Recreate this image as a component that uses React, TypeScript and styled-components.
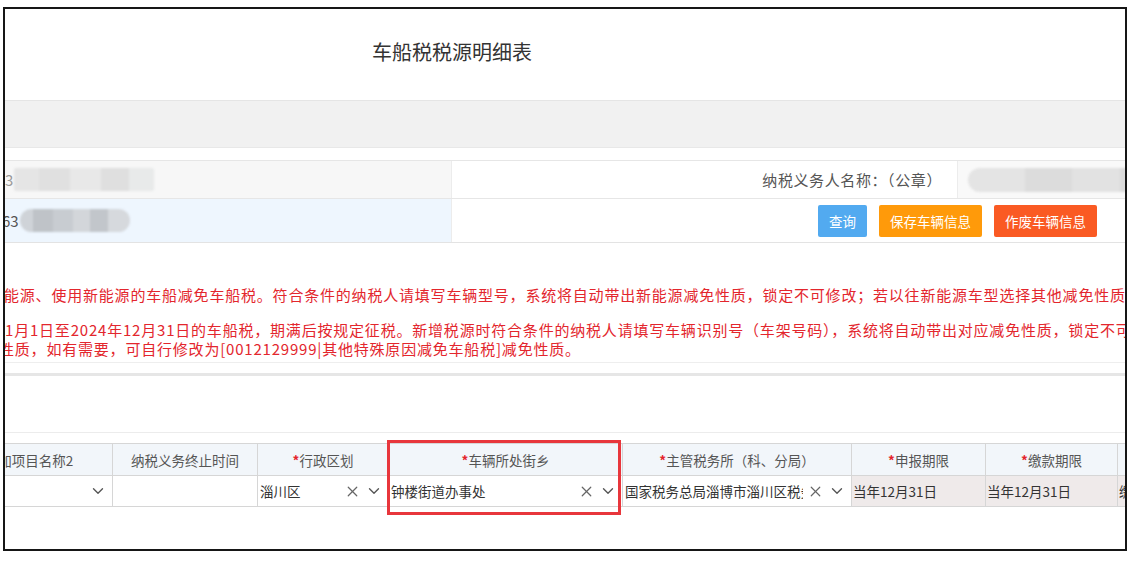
import React from "react";
import styled, { createGlobalStyle } from "styled-components";
import { X, ChevronDown } from "lucide-react";

const GlobalStyle = createGlobalStyle`
  html, body {
    margin: 0;
    padding: 0;
    background: #fff;
  }
  body {
    font-family: "Microsoft YaHei", "Noto Sans CJK SC", "Noto Sans", sans-serif;
    color: #333;
  }
`;

const Frame = styled.div`
  margin: 7px 0 0 3px;
  width: 1120px;
  height: 540px;
  border: 2px solid #161616;
  overflow: hidden;
  background: #fff;
  display: flex;
  flex-direction: column;
`;

const TitleBar = styled.div`
  height: 91px;
  box-sizing: border-box;
  padding: 33px 226px 0 0;
  text-align: center;
  font-size: 20px;
  line-height: 20px;
  color: #333;
`;

const GreyBand = styled.div`
  height: 48px;
  box-sizing: border-box;
  background: #f1f1f1;
  border-top: 1px solid #e5e5e5;
  border-bottom: 1px solid #e8e8e8;
  margin-bottom: 12px;
`;

const InfoRow = styled.div<{ $height: number; $last?: boolean }>`
  display: grid;
  grid-template-columns: 447px 1fr 168px;
  height: ${(p) => p.$height}px;
  box-sizing: border-box;
  border-top: 1px solid #e6e6e6;
  border-bottom: ${(p) => (p.$last ? "1px solid #e3e3e3" : "none")};
`;

const MaskedCell = styled.div<{ $tone: string }>`
  display: flex;
  align-items: center;
  gap: 1px;
  background: ${(p) => p.$tone};
  border-right: 1px solid #ececec;
  font-size: 15px;
  overflow: hidden;
`;

const Tail = styled.span<{ $shift: number; $color: string }>`
  margin-left: ${(p) => p.$shift}px;
  color: ${(p) => p.$color};
`;

const Blur = styled.div<{ $width: number; $round?: boolean; $dark?: boolean }>`
  width: ${(p) => p.$width}px;
  height: 23px;
  border-radius: ${(p) => (p.$round ? "12px" : "2px")};
  filter: blur(1.2px);
  background: ${(p) =>
    p.$dark
      ? "linear-gradient(90deg, #cfd3d8 0 12%, #bfc3c8 12% 30%, #c8ccd1 30% 48%, #d3d6da 48% 64%, #c2c6cb 64% 80%, #d6d9dd 80%)"
      : "linear-gradient(90deg, #e5e5e5 0 18%, #e0e0e0 18% 40%, #e8e8e8 40% 62%, #dfdfdf 62% 82%, #e8eaea 82%)"};
`;

const LabelCell = styled.div`
  display: flex;
  align-items: center;
  justify-content: flex-end;
  padding-right: 15px;
  font-size: 15px;
  letter-spacing: 0.6px;
  color: #555;
`;

const ValueCell = styled.div`
  display: flex;
  align-items: center;
  padding-left: 10px;
  background: #f9f9f9;
  border-left: 1px solid #ececec;
  overflow: hidden;
`;

const Pill = styled.div`
  flex: none;
  width: 190px;
  height: 24px;
  border-radius: 12px;
  filter: blur(1px);
  background: linear-gradient(90deg, #e4e4e4 0 30%, #dcdcdc 30% 55%, #e2e2e2 55% 80%, #dadada 80%);
`;

const ActionCell = styled.div`
  grid-column: 2 / 4;
  display: flex;
  align-items: center;
  justify-content: flex-end;
  gap: 12px;
  padding-right: 28px;
`;

const ActionButton = styled.button<{ $bg: string }>`
  height: 32px;
  padding: 0 11px;
  border: none;
  border-radius: 2px;
  background: ${(p) => p.$bg};
  color: #fff;
  font-family: inherit;
  font-size: 13.5px;
  cursor: pointer;
`;

const Notes = styled.div`
  margin-top: 42px;
  padding-bottom: 4px;
  border-bottom: 1px solid #eeeeee;
  color: #e3262d;
  font-size: 15px;
  letter-spacing: 0.8px;
`;

const NoteLine = styled.div<{ $indent: number; $height: number; $gap?: number }>`
  white-space: nowrap;
  line-height: ${(p) => p.$height}px;
  text-indent: ${(p) => p.$indent}px;
  margin-top: ${(p) => p.$gap ?? 0}px;
`;

const ThickRule = styled.div`
  margin-top: 10px;
  height: 3px;
  background: #e6e6e6;
`;

const ThinRule = styled.div`
  margin-top: 56px;
  height: 1px;
  background: #ececec;
`;

const TableWrap = styled.div`
  position: relative;
  margin-top: 10px;
`;

const Grid = styled.table`
  margin-left: -60px;
  width: 1272px;
  border-collapse: collapse;
  table-layout: fixed;
  font-size: 13.5px;
`;

const Col = styled.col<{ $w: number }>`
  width: ${(p) => p.$w}px;
`;

const Head = styled.th`
  height: 31px;
  padding: 0;
  background: #f2f6fa;
  border: 1px solid #d6d6d6;
  color: #555;
  font-weight: normal;
  white-space: nowrap;
  overflow: hidden;
`;

const Star = styled.span`
  color: #e4242b;
  font-weight: bold;
`;

const Cell = styled.td<{ $locked?: boolean }>`
  height: 30px;
  padding: 0;
  background: ${(p) => (p.$locked ? "#efeaea" : "#fff")};
  border: 1px solid #d6d6d6;
  color: #333;
  white-space: nowrap;
  overflow: hidden;
`;

const SelectBox = styled.div`
  display: flex;
  align-items: center;
  gap: 4px;
  padding: 0 5px 0 2px;
`;

const SelectText = styled.span`
  flex: 1;
  min-width: 0;
  overflow: hidden;
  white-space: nowrap;
`;

const PlainText = styled.div`
  padding-left: 1px;
`;

const Highlight = styled.div`
  position: absolute;
  left: 382px;
  top: -3px;
  width: 234px;
  height: 75px;
  box-sizing: border-box;
  border: 3px solid #e8363c;
  pointer-events: none;
`;

type Column = { key: string; title: string; width: number; required?: boolean };

const columns: Column[] = [
  { key: "fjxm", title: "附加项目名称2", width: 167 },
  { key: "zzsj", title: "纳税义务终止时间", width: 145 },
  { key: "xzqh", title: "行政区划", width: 131, required: true },
  { key: "jdxz", title: "车辆所处街乡", width: 234, required: true },
  { key: "swjg", title: "主管税务所（科、分局）", width: 229, required: true },
  { key: "sbqx", title: "申报期限", width: 134, required: true },
  { key: "jkqx", title: "缴款期限", width: 132, required: true },
  { key: "more", title: "", width: 100 },
];

function Select({ value, clearable }: { value: string; clearable?: boolean }) {
  return (
    <SelectBox>
      <SelectText>{value}</SelectText>
      {clearable && <X size={17} strokeWidth={1.7} color="#666" />}
      <ChevronDown size={18} strokeWidth={1.8} color="#555" />
    </SelectBox>
  );
}

export default function App() {
  return (
    <>
      <GlobalStyle />
      <Frame>
        <TitleBar>车船税税源明细表</TitleBar>
        <GreyBand />

        <InfoRow $height={38}>
          <MaskedCell $tone="#f7f7f7">
            <Tail $shift={0} $color="#9a9a9a">3</Tail>
            <Blur $width={140} />
          </MaskedCell>
          <LabelCell>纳税义务人名称：（公章）</LabelCell>
          <ValueCell>
            <Pill />
          </ValueCell>
        </InfoRow>

        <InfoRow $height={45} $last>
          <MaskedCell $tone="#eef6fe">
            <Tail $shift={-3} $color="#555">63</Tail>
            <Blur $width={110} $round $dark />
          </MaskedCell>
          <ActionCell>
            <ActionButton $bg="#52aaf0">查询</ActionButton>
            <ActionButton $bg="#ff9a0a">保存车辆信息</ActionButton>
            <ActionButton $bg="#fa5a23">作废车辆信息</ActionButton>
          </ActionCell>
        </InfoRow>

        <Notes>
          <NoteLine $indent={-1} $height={20}>
            能源、使用新能源的车船减免车船税。符合条件的纳税人请填写车辆型号，系统将自动带出新能源减免性质，锁定不可修改；若以往新能源车型选择其他减免性质，需重新选择。
          </NoteLine>
          <NoteLine $indent={0} $height={19} $gap={15}>
            1月1日至2024年12月31日的车船税，期满后按规定征税。新增税源时符合条件的纳税人请填写车辆识别号（车架号码），系统将自动带出对应减免性质，锁定不可修改。
          </NoteLine>
          <NoteLine $indent={-6} $height={19}>
            性质，如有需要，可自行修改为[0012129999|其他特殊原因减免车船税]减免性质。
          </NoteLine>
        </Notes>
        <ThickRule />
        <ThinRule />

        <TableWrap>
          <Grid>
            <colgroup>
              {columns.map((c) => (
                <Col key={c.key} $w={c.width} />
              ))}
            </colgroup>
            <thead>
              <tr>
                {columns.map((c) => (
                  <Head key={c.key}>
                    {c.required && <Star>*</Star>}
                    {c.title}
                  </Head>
                ))}
              </tr>
            </thead>
            <tbody>
              <tr>
                <Cell>
                  <Select value="" />
                </Cell>
                <Cell />
                <Cell>
                  <Select value="淄川区" clearable />
                </Cell>
                <Cell>
                  <Select value="钟楼街道办事处" clearable />
                </Cell>
                <Cell>
                  <Select value="国家税务总局淄博市淄川区税务所" clearable />
                </Cell>
                <Cell $locked>
                  <PlainText>当年12月31日</PlainText>
                </Cell>
                <Cell $locked>
                  <PlainText>当年12月31日</PlainText>
                </Cell>
                <Cell $locked>
                  <PlainText>缴款期限</PlainText>
                </Cell>
              </tr>
            </tbody>
          </Grid>
          <Highlight />
        </TableWrap>
      </Frame>
    </>
  );
}
